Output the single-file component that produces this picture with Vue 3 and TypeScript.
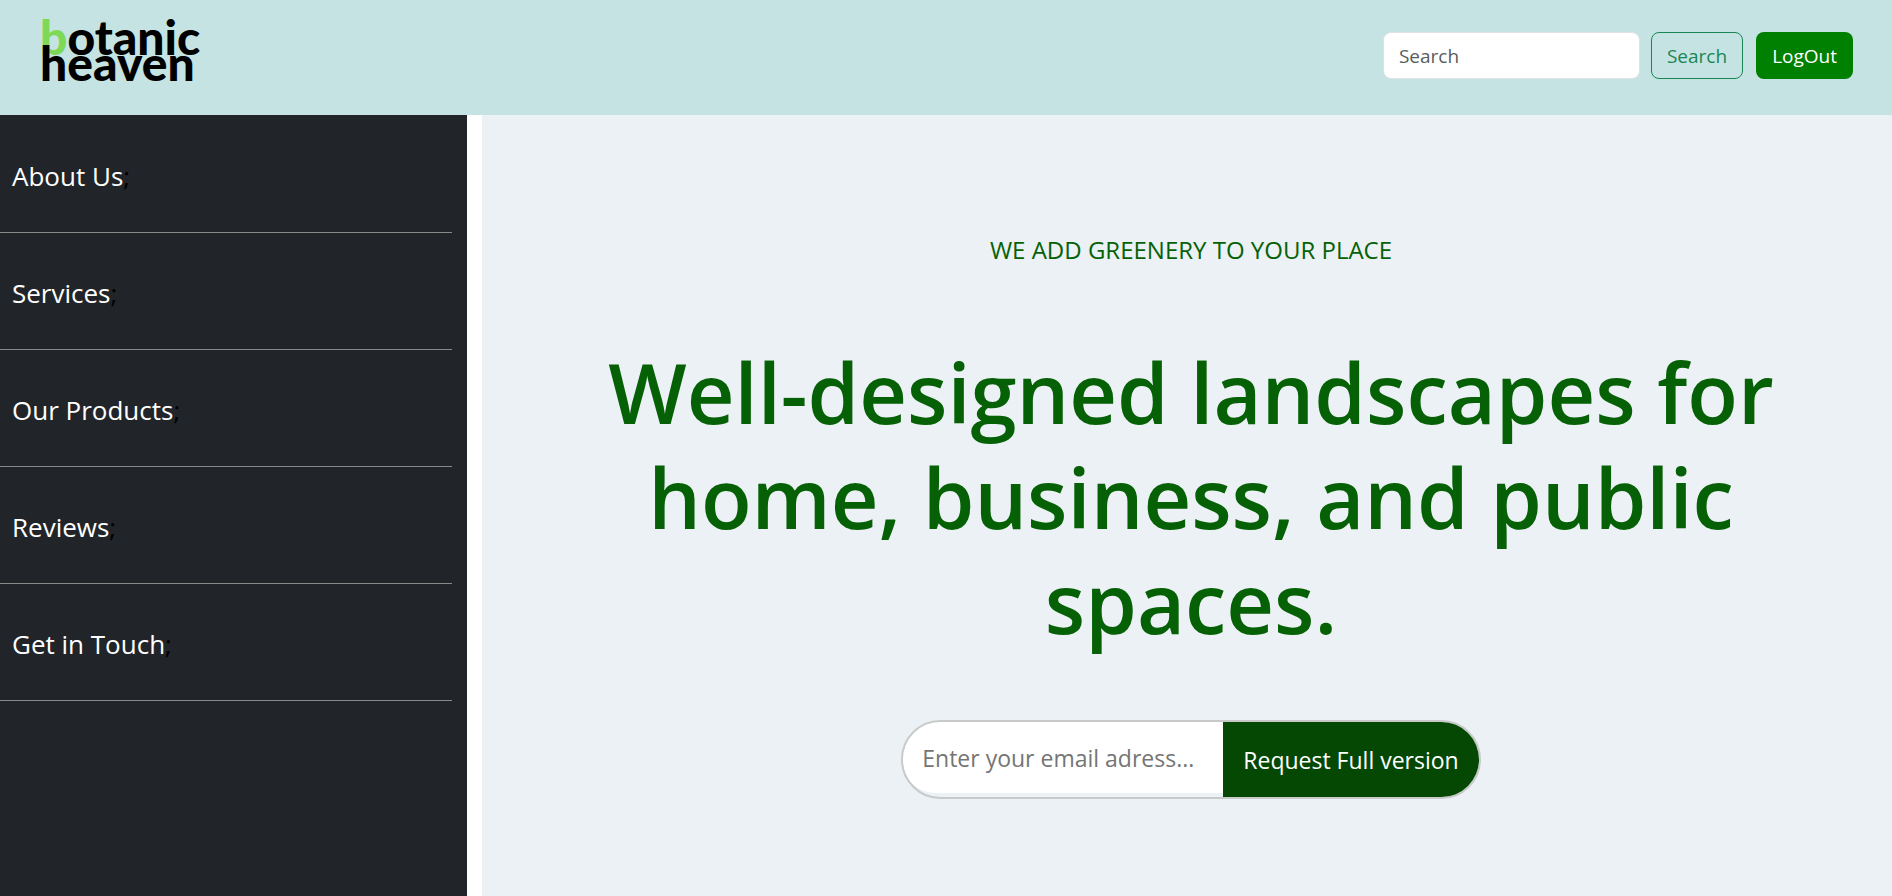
<script setup lang="ts">
import { ref } from 'vue'

interface NavItem {
  label: string
  href: string
}

const navItems: NavItem[] = [
  { label: 'About Us', href: '#about' },
  { label: 'Services', href: '#services' },
  { label: 'Our Products', href: '#products' },
  { label: 'Reviews', href: '#reviews' },
  { label: 'Get in Touch', href: '#contact' },
]

const query = ref('')
const email = ref('')
</script>

<template>
  <div class="page">
    <header class="topbar">
      <a class="brand" href="#" aria-label="botanic heaven">
        <span class="brand-line"><span class="brand-accent">b</span>otanic</span>
        <span class="brand-line">heaven</span>
      </a>
      <div class="actions">
        <form class="search" role="search" @submit.prevent>
          <input v-model="query" class="search-input" type="search" placeholder="Search" aria-label="Search" />
          <button class="btn btn-outline" type="submit">Search</button>
        </form>
        <button class="btn btn-solid" type="button">LogOut</button>
      </div>
    </header>

    <div class="body">
      <nav class="sidebar" aria-label="Main">
        <ul class="nav-list">
          <li v-for="item in navItems" :key="item.href" class="nav-item">
            <a class="nav-link" :href="item.href">{{ item.label }}</a>;
          </li>
        </ul>
      </nav>

      <main class="hero">
        <p class="tagline">WE ADD GREENERY TO YOUR PLACE</p>
        <h1 class="headline">Well-designed landscapes for home, business, and public spaces.</h1>
        <form class="request" @submit.prevent>
          <input
            v-model="email"
            class="request-input"
            type="email"
            placeholder="Enter your email adress..."
            aria-label="Email address"
          />
          <button class="request-btn" type="submit">Request Full version</button>
        </form>
      </main>
    </div>
  </div>
</template>

<style>
body {
  margin: 0;
  background: #fff;
}
</style>

<style scoped>
.page {
  display: flex;
  flex-direction: column;
  min-height: 100vh;
  font-family: 'Segoe UI', 'Open Sans', 'Noto Sans', sans-serif;
  color: #000;
}

.page *,
.page {
  box-sizing: border-box;
}

.topbar {
  display: flex;
  align-items: flex-start;
  justify-content: space-between;
  min-height: 115px;
  padding: 12px 39px 0 40px;
  background: #c5e3e2;
}

.brand {
  display: flex;
  flex-direction: column;
  padding-top: 12px;
  font-family: Lato, sans-serif;
  font-size: 48px;
  font-weight: 900;
  line-height: 26px;
  color: #000;
  text-decoration: none;
}

.brand-accent {
  color: #7ed957;
}

.actions {
  display: flex;
  gap: 13px;
  padding-top: 20px;
}

.search {
  display: flex;
  gap: 11px;
}

.search-input,
.btn {
  height: 47px;
  padding: 0 15px;
  border: 1px solid transparent;
  border-radius: 8px;
  font-family: inherit;
  font-size: 19px;
}

.search-input {
  width: 257px;
  border-color: #dee2e6;
  background: #fff;
  color: #212529;
  appearance: none;
}

.search-input::placeholder {
  color: #595c5f;
  opacity: 1;
}

.btn {
  cursor: pointer;
}

.btn-outline {
  border-color: #198754;
  background: transparent;
  color: #198754;
}

.btn-solid {
  background: #008000;
  color: #fff;
}

.body {
  display: flex;
  flex: 1;
  gap: 15px;
}

.sidebar {
  flex: 0 0 467px;
  padding: 1px 15px 0 0;
  background: #212529;
}

.nav-list {
  margin: 0;
  padding: 0;
  list-style: none;
}

.nav-item {
  height: 117px;
  padding: 40px 12px 0;
  border-bottom: 1px solid #868987;
  font-size: 26px;
  line-height: 40px;
}

.nav-link {
  color: #fff;
  text-decoration: none;
}

.hero {
  display: flex;
  flex: 1;
  flex-direction: column;
  align-items: center;
  padding: 116px 96px 96px 104px;
  background: #ebf1f4;
  text-align: center;
}

.tagline {
  margin: 0;
  font-size: 24px;
  line-height: 38px;
  color: #066106;
}

.headline {
  margin: 70px 0 0;
  font-size: 83px;
  font-weight: 600;
  line-height: 105px;
  color: #066106;
}

.request {
  display: flex;
  height: 79px;
  margin-top: 66px;
  overflow: hidden;
  border: 2px solid #c8caca;
  border-radius: 40px;
}

.request-input {
  width: 320px;
  height: 71px;
  padding: 0 19px;
  border: 0;
  border-bottom-left-radius: 32px;
  background: #fff;
  font-family: inherit;
  font-size: 23px;
}

.request-input::placeholder {
  color: #757575;
  opacity: 1;
}

.request-btn {
  padding: 0 20px;
  border: 0;
  background: #044804;
  color: #fff;
  font-family: inherit;
  font-size: 23px;
  cursor: pointer;
}
</style>
